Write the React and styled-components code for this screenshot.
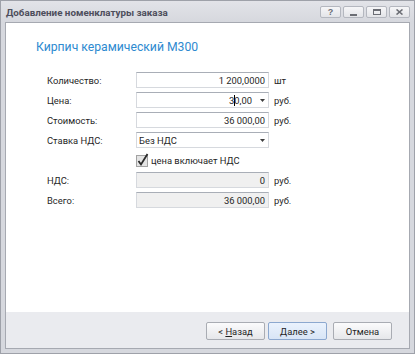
import React from "react";
import styled, { createGlobalStyle } from "styled-components";

const Global = createGlobalStyle`
  html, body { margin: 0; padding: 0; background: #ffffff; }
  body { font-family: Roboto, "Liberation Sans", sans-serif; }
  * { box-sizing: border-box; }
`;

const Window = styled.div`
  width: 415px;
  height: 354px;
  border: 1px solid #9ea1a9;
  background: #d6d8de;
  padding: 0 4px 4px 4px;
  display: flex;
  flex-direction: column;
`;

const TitleBar = styled.div`
  height: 21px;
  display: flex;
  align-items: flex-start;
  justify-content: space-between;
  background: linear-gradient(#e2e3e8, #d6d8de);
  margin: 0 -4px;
  padding: 5px 4px 0 5px;
`;

const TitleText = styled.div`
  font-family: Roboto, "Liberation Sans", sans-serif;
  font-weight: bold;
  font-size: 9.8px;
  line-height: 13px;
  color: #4e4e5c;
`;

const TitleButtons = styled.div`
  display: flex;
  gap: 2px;
`;

const TitleButton = styled.div`
  width: 21px;
  height: 12px;
  border: 1px solid #b4b7bf;
  border-radius: 2px;
  background: linear-gradient(#f6f6f8, #e3e4e8);
  display: flex;
  align-items: center;
  justify-content: center;
  font-family: "Liberation Sans", sans-serif;
  font-weight: bold;
  font-size: 9px;
  color: #6b6d74;
`;

const Client = styled.div`
  flex: 1;
  border: 1px solid #a6a9b1;
  background: #ffffff;
  display: flex;
  flex-direction: column;
`;

const Body = styled.div`
  flex: 1;
  padding: 14px 0 0 30px;
`;

const Heading = styled.div`
  font-family: Roboto, "Liberation Sans", sans-serif;
  font-size: 12.2px;
  line-height: 20px;
  color: #2e8ad0;
  margin-bottom: 15px;
`;

const Form = styled.div`
  margin-left: 11px;
  display: grid;
  grid-template-columns: 84px 133px auto;
  grid-auto-rows: 16px;
  column-gap: 5px;
  row-gap: 4px;
  font-family: Roboto, "Liberation Sans", sans-serif;
  font-size: 9.4px;
  color: #1f1f1f;
`;

const Label = styled.div`
  grid-column: 1;
  display: flex;
  align-items: center;
`;

const Field = styled.div`
  grid-column: 2;
  border: 1px solid #d6d9de;
  border-top-color: #a9aeb7;
  background: ${(p) => (p.$disabled ? "#f0f0f0" : "#ffffff")};
  display: flex;
  align-items: center;
  justify-content: ${(p) => (p.$left ? "flex-start" : "flex-end")};
  padding: 0 3px 0 2px;
  gap: 8px;
`;

const Value = styled.span`
  flex: ${(p) => (p.$left ? 1 : "none")};
  white-space: pre;
`;

const Caret = styled.span`
  display: inline-block;
  width: 1px;
  height: 11px;
  background: #000;
  vertical-align: -2px;
  margin: 0 -1px 0 0;
`;

const Unit = styled.div`
  grid-column: 3;
  display: flex;
  align-items: center;
`;

const CheckRow = styled.label`
  grid-column: 2 / 4;
  display: flex;
  align-items: center;
  gap: 2px;
`;

const Footer = styled.div`
  height: 36px;
  background: #eaebef;
  display: flex;
  justify-content: flex-end;
  align-items: flex-start;
  padding: 10px 17px 0 0;
`;

const Button = styled.button`
  width: 59px;
  height: 18px;
  margin-left: ${(p) => p.$gap}px;
  padding: 0;
  border: 1px solid ${(p) => (p.$default ? "#8ca8cf" : "#a9acb3")};
  border-radius: 2px;
  background: ${(p) =>
    p.$default
      ? "linear-gradient(#eaf2fd, #d8e5f6)"
      : "linear-gradient(#fbfbfc, #e6e7ea)"};
  font-family: Roboto, "Liberation Sans", sans-serif;
  font-size: 9.4px;
  color: #1f1f1f;
  u { text-decoration: underline; }
`;

const Arrow = () => (
  <svg width="5" height="3" viewBox="0 0 5 3">
    <path d="M0 0H5L2.5 3Z" fill="#3d3d3d" />
  </svg>
);

export default function App() {
  return (
    <>
      <Global />
      <Window>
        <TitleBar>
          <TitleText>Добавление номенклатуры заказа</TitleText>
          <TitleButtons>
            <TitleButton>?</TitleButton>
            <TitleButton>
              <svg width="7" height="8" viewBox="0 0 7 8">
                <rect x="0" y="6" width="7" height="2" fill="#6b6d74" />
              </svg>
            </TitleButton>
            <TitleButton>
              <svg width="8" height="6" viewBox="0 0 8 6">
                <rect x="0.5" y="0.5" width="7" height="5" fill="none" stroke="#6b6d74" />
                <rect x="0" y="0" width="8" height="2" fill="#6b6d74" />
              </svg>
            </TitleButton>
            <TitleButton>
              <svg width="7" height="6" viewBox="0 0 7 6">
                <path d="M0.5 0.5L6.5 5.5M6.5 0.5L0.5 5.5" stroke="#6b6d74" strokeWidth="1.6" />
              </svg>
            </TitleButton>
          </TitleButtons>
        </TitleBar>
        <Client>
          <Body>
            <Heading>Кирпич керамический М300</Heading>
            <Form>
              <Label>Количество:</Label>
              <Field><Value>1 200,0000</Value></Field>
              <Unit>шт</Unit>

              <Label>Цена:</Label>
              <Field>
                <Value>3<Caret />0,00</Value>
                <Arrow />
              </Field>
              <Unit>руб.</Unit>

              <Label>Стоимость:</Label>
              <Field><Value>36 000,00</Value></Field>
              <Unit>руб.</Unit>

              <Label>Ставка НДС:</Label>
              <Field $left>
                <Value $left>Без НДС</Value>
                <Arrow />
              </Field>
              <Unit />

              <CheckRow>
                <svg width="13" height="14" viewBox="0 0 13 14">
                  <rect x="0.5" y="2.5" width="11" height="11" fill="#e4e4e4" stroke="#a3a3a3" />
                  <path d="M2.5 8L5 11.5L11.5 1" fill="none" stroke="#2b2b2b" strokeWidth="1.8" />
                </svg>
                цена включает НДС
              </CheckRow>

              <Label>НДС:</Label>
              <Field $disabled><Value>0</Value></Field>
              <Unit>руб.</Unit>

              <Label>Всего:</Label>
              <Field $disabled><Value>36 000,00</Value></Field>
              <Unit>руб.</Unit>
            </Form>
          </Body>
          <Footer>
            <Button $gap={0}>&lt; <u>Н</u>азад</Button>
            <Button $gap={3} $default><u>Д</u>алее &gt;</Button>
            <Button $gap={6}>Отмена</Button>
          </Footer>
        </Client>
      </Window>
    </>
  );
}
